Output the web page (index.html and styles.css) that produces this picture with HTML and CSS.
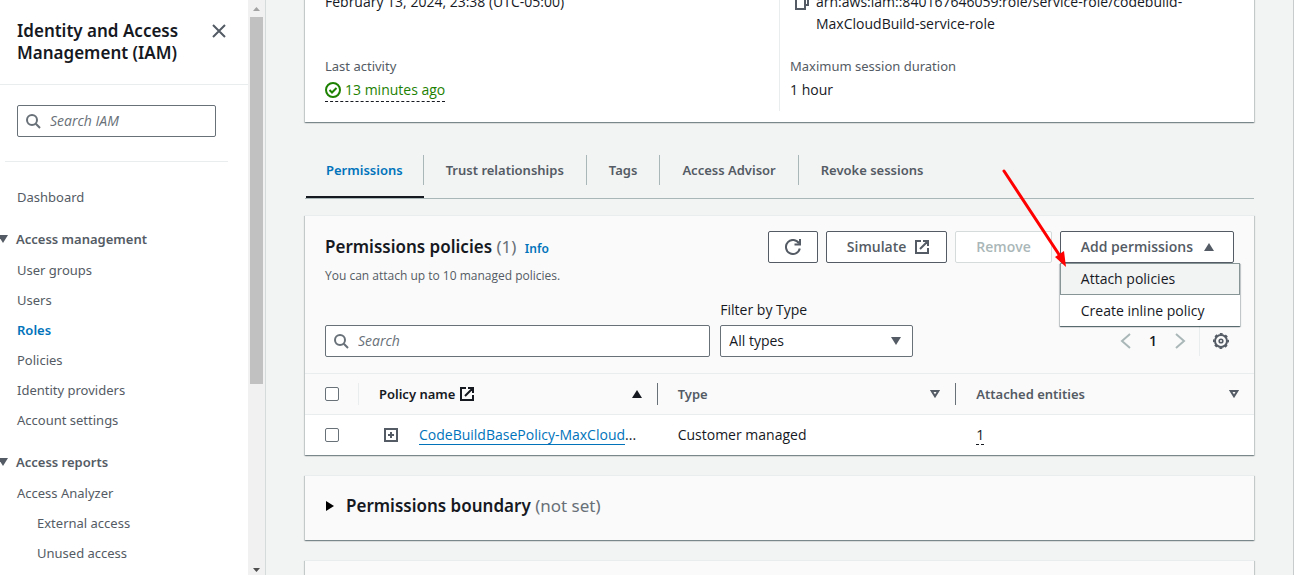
FILE: index.html
```html
<!DOCTYPE html>
<html lang="en">
<head>
<meta charset="utf-8">
<title>IAM role</title>
<link rel="stylesheet" href="styles.css">
</head>
<body>
<div class="app">
  <aside class="sidebar">
    <div class="side-body">
      <header class="side-head">
        <h2 class="side-title">Identity and Access Management (IAM)</h2>
        <button class="icon-btn" type="button" aria-label="Close navigation">
          <svg width="16" height="16" viewBox="0 0 16 16"><path d="M2 2l12 12M14 2L2 14" class="line"/></svg>
        </button>
      </header>
      <label class="search side-search">
        <svg width="16" height="16" viewBox="0 0 16 16"><circle cx="6" cy="7" r="5" class="line"/><path d="M9.800 10.800L14 15" class="line"/></svg>
        <input type="text" placeholder="Search IAM" aria-label="Search IAM">
      </label>
      <hr class="side-rule">
      <nav class="nav">
        <a class="nav-link" href="#">Dashboard</a>
        <button class="nav-group" type="button"><svg width="10" height="8" viewBox="0 0 10 8"><path d="M0 0h10L5 8z"/></svg>Access management</button>
        <ul class="nav-list">
          <li><a class="nav-link" href="#">User groups</a></li>
          <li><a class="nav-link" href="#">Users</a></li>
          <li><a class="nav-link current" href="#">Roles</a></li>
          <li><a class="nav-link" href="#">Policies</a></li>
          <li><a class="nav-link" href="#">Identity providers</a></li>
          <li><a class="nav-link" href="#">Account settings</a></li>
        </ul>
        <button class="nav-group" type="button"><svg width="10" height="8" viewBox="0 0 10 8"><path d="M0 0h10L5 8z"/></svg>Access reports</button>
        <ul class="nav-list">
          <li><a class="nav-link" href="#">Access Analyzer</a></li>
          <li><a class="nav-link nested" href="#">External access</a></li>
          <li><a class="nav-link nested" href="#">Unused access</a></li>
        </ul>
      </nav>
    </div>
    <div class="scrollbar" aria-hidden="true">
      <svg width="7" height="4" viewBox="0 0 7 4"><path d="M3.500 0L7 4H0z" fill="#a3a3a3"/></svg>
      <div class="thumb"></div>
      <svg width="7" height="4" viewBox="0 0 7 4"><path d="M0 0h7L3.500 4z" fill="#505050"/></svg>
    </div>
  </aside>

  <main class="main">
    <section class="panel summary">
      <dl class="col">
        <dd>February 13, 2024, 23:38 (UTC-05:00)</dd>
        <dt class="second">Last activity</dt>
        <dd class="value"><span class="status"><svg width="16" height="16" viewBox="0 0 16 16"><circle cx="8" cy="8" r="7" class="line"/><path d="M4.500 8l2.500 2.500L11.500 6" class="line"/></svg>13 minutes ago</span></dd>
      </dl>
      <dl class="col">
        <dd class="arn">
          <button class="icon-btn copy" type="button" aria-label="Copy ARN"><svg width="16" height="16" viewBox="0 0 16 16"><path d="M2 5h9v10H2zM5 5V1h9v10h-3" class="line"/></svg></button>
          <span>arn:aws:iam::840167646059:role/service-role/codebuild-<br>MaxCloudBuild-service-role</span>
        </dd>
        <dt class="second">Maximum session duration</dt>
        <dd class="value">1 hour</dd>
      </dl>
    </section>

    <div class="tabs" role="tablist">
      <button class="tab active" role="tab" aria-selected="true" type="button"><span>Permissions</span></button>
      <button class="tab" role="tab" type="button"><span>Trust relationships</span></button>
      <button class="tab" role="tab" type="button"><span>Tags</span></button>
      <button class="tab" role="tab" type="button"><span>Access Advisor</span></button>
      <button class="tab" role="tab" type="button"><span>Revoke sessions</span></button>
    </div>

    <div class="stack">
    <section class="panel">
      <header class="panel-head">
        <div class="heading">
          <h2 class="title">Permissions policies <span class="count">(1)</span> <a class="info" href="#">Info</a></h2>
          <p class="desc">You can attach up to 10 managed policies.</p>
        </div>
        <div class="actions">
          <button class="btn" type="button" aria-label="Refresh"><svg width="16" height="16" viewBox="0 0 16 16"><path d="M14.800 9.500A7 7 0 1 1 14 4.400" class="line"/><path d="M15 0v5.500H9.500" class="line"/></svg></button>
          <button class="btn" type="button">Simulate <svg width="16" height="16" viewBox="0 0 16 16"><path d="M7 2H2v12h12V9M9 2h5v5M14 2L6 10" class="line"/></svg></button>
          <button class="btn" type="button" disabled>Remove</button>
          <div class="dropdown">
            <button class="btn" type="button" aria-expanded="true">Add permissions <svg width="16" height="16" viewBox="0 0 16 16"><path d="M3 12h10L8 4z" class="fill"/></svg></button>
            <ul class="menu">
              <li><button class="item hover" type="button">Attach policies</button></li>
              <li><button class="item" type="button">Create inline policy</button></li>
            </ul>
          </div>
        </div>
      </header>
      <div class="filters">
        <label class="search">
          <svg width="16" height="16" viewBox="0 0 16 16"><circle cx="6" cy="7" r="5" class="line"/><path d="M9.800 10.800L14 15" class="line"/></svg>
          <input type="text" placeholder="Search" aria-label="Search policies">
        </label>
        <div class="field">
          <label for="type">Filter by Type</label>
          <div class="select">
            <select id="type"><option>All types</option></select>
            <svg width="10" height="8" viewBox="0 0 10 8"><path d="M0 0h10L5 8z" class="fill"/></svg>
          </div>
        </div>
        <div class="pager">
          <button class="icon-btn pale" type="button" aria-label="Previous page"><svg width="16" height="16" viewBox="0 0 16 16"><path d="M12 1L4 8l8 7" class="line"/></svg></button>
          <button class="icon-btn page" type="button">1</button>
          <button class="icon-btn pale" type="button" aria-label="Next page"><svg width="16" height="16" viewBox="0 0 16 16"><path d="M4 1l8 7-8 7" class="line"/></svg></button>
          <span class="gear">
          <button class="icon-btn" type="button" aria-label="Preferences"><svg width="16" height="16" viewBox="0 0 16 16"><g fill="none" stroke="currentColor"><circle cx="8" cy="8" r="6" stroke-width="2"/><circle cx="8" cy="8" r="7.200" stroke-width="1.600" stroke-dasharray="2.830" stroke-dashoffset="1.410"/><circle cx="8" cy="8" r="1.800" stroke-width="1.600"/></g></svg></button>
          </span>
        </div>
      </div>
      <table class="table">
        <thead>
          <tr>
            <th class="pick"><input type="checkbox" aria-label="Select all"></th>
            <th class="sorted"><div class="th">Policy name <svg width="16" height="16" viewBox="0 0 16 16"><path d="M7 2H2v12h12V9M9 2h5v5M14 2L6 10" class="line"/></svg><svg class="sort" width="10" height="8" viewBox="0 0 10 8"><path d="M0 8h10L5 0z" class="fill"/></svg></div></th>
            <th><div class="th">Type <svg class="sort" width="10" height="8" viewBox="0 0 10 8"><path d="M1.700 1h6.600L5 6.300z" class="line"/></svg></div></th>
            <th><div class="th">Attached entities <svg class="sort" width="10" height="8" viewBox="0 0 10 8"><path d="M1.700 1h6.600L5 6.300z" class="line"/></svg></div></th>
          </tr>
        </thead>
        <tbody>
          <tr>
            <td class="pick"><input type="checkbox" aria-label="Select CodeBuildBasePolicy"></td>
            <td><div class="policy"><button class="icon-btn" type="button" aria-label="Expand"><svg width="16" height="16" viewBox="0 0 16 16"><path d="M2 2h12v12H2zM5 8h6M8 5v6" class="line"/></svg></button><span><a class="link" href="#">CodeBuildBasePolicy-MaxCloud</a>...</span></div></td>
            <td>Customer managed</td>
            <td><span class="dashed">1</span></td>
          </tr>
        </tbody>
      </table>
    </section>

    <section class="panel">
      <button class="expander" type="button"><svg width="8" height="10" viewBox="0 0 8 10"><path d="M0 0v10l8-5z"/></svg><span>Permissions boundary <span class="count">(not set)</span></span></button>
    </section>
    <section class="panel">
      <div class="expander"></div>
    </section>
    </div>
  </main>
  <svg class="pointer" width="66" height="100" viewBox="0 0 66 100" aria-hidden="true"><path d="M2 2L58 87" stroke="#f00" stroke-width="3" stroke-linecap="round"/><path d="M64 98L53 88l9-6z" fill="#f00"/></svg>
</div>
</body>
</html>
```

FILE: styles.css
```css
* { box-sizing: border-box; }
body {
  margin: 0;
  font-family: "Open Sans", "Noto Sans", sans-serif;
  font-size: 14px;
  line-height: 22px;
  color: #16191f;
  background: #f2f3f3;
}
h2, p, ul, dl, dd { margin: 0; padding: 0; }
ul { list-style: none; }
button, input, select { font: inherit; color: inherit; }
svg { display: block; flex: none; }
.line { fill: none; stroke: currentColor; stroke-width: 2; }
.fill { fill: currentColor; }

.app { position: relative; display: flex; height: 100vh; overflow: hidden; }

.icon-btn {
  display: flex;
  padding: 0;
  border: 0;
  background: none;
  color: #545b64;
}

/* Labels, navigation and headings */
.nav-link, .nav-group, .tab, .table th, .col dt {
  font-family: "Noto Sans", "Open Sans", sans-serif;
  font-size: 13px;
}
.side-title, .title, .expander {
  font-family: "Noto Sans", "Open Sans", sans-serif;
  font-size: 17px;
  font-weight: 600;
}

/* Side navigation */
.sidebar {
  display: flex;
  flex: none;
  width: 266px;
  background: #fff;
  border-right: 1px solid #d5dbdb;
}
.side-body { flex: 1; overflow: hidden; }
.side-head {
  display: flex;
  justify-content: space-between;
  padding: 20px 21px 20px 17px;
  border-bottom: 1px solid #eaeded;
}
.side-head .icon-btn { padding-top: 3px; height: 19px; }
.side-title { width: 180px; }
.search {
  display: flex;
  align-items: center;
  gap: 8px;
  height: 32px;
  padding: 0 8px;
  color: #687078;
  background: #fff;
  border: 1px solid #687078;
  border-radius: 2px;
}
.search input {
  flex: 1;
  min-width: 0;
  padding: 0;
  border: 0;
  outline: 0;
  background: none;
}
.search input::placeholder { color: #687078; font-style: italic; opacity: 1; }
.side-search { margin: 20px 32px 24px 17px; }
.side-rule { margin: 0 20px 24px 5px; border: 0; border-top: 1px solid #eaeded; }
.nav { padding-left: 17px; }
.nav-link { display: block; color: #545b64; text-decoration: none; }
.nav-link.current { color: #0073bb; font-weight: 600; }
.nav-link.nested { padding-left: 20px; }
.nav-group {
  display: flex;
  align-items: center;
  gap: 8px;
  margin: 20px 0 9px -19px;
  padding: 0;
  border: 0;
  background: none;
  color: #545b64;
  font-weight: 600;
}
.nav-group path { fill: #545b64; }
.nav-list { display: grid; gap: 8px; }

.scrollbar {
  display: flex;
  flex: none;
  flex-direction: column;
  align-items: center;
  justify-content: space-between;
  width: 17px;
  padding: 7px 2px 3px;
  background: #f1f1f1;
}
.thumb { width: 13px; height: 65%; margin: 6px 0 auto; background: #c1c1c1; }

/* Content */
.main {
  flex: 1;
  min-width: 0;
  padding: 0 39px;
  overflow: hidden;
  border-right: 1px solid #c8cccc;
}
.panel {
  background: #fafafa;
  border-top: 1px solid #eaeded;
  box-shadow: 0 1px 1px 0 rgba(0, 28, 36, .3), 1px 1px 1px 0 rgba(0, 28, 36, .15), -1px 1px 1px 0 rgba(0, 28, 36, .15);
}
.summary {
  display: grid;
  grid-template-columns: 1fr 1fr;
  margin-top: -10px;
  padding: 0 21px 11px 20px;
  background: #fff;
}
.col { display: flex; flex-direction: column; padding-bottom: 10px; }
.col + .col { padding-left: 10px; border-left: 1px solid #eaeded; }
.col dt { margin-bottom: 2px; color: #545b64; }
.col .second { margin-top: auto; }
.value { display: flex; height: 22px; }
.arn { display: flex; gap: 6px; margin-bottom: 20px; padding-left: 4px; }
.arn span { min-width: 0; }
.copy { padding-top: 3px; height: 19px; }
.status {
  display: flex;
  align-items: center;
  gap: 4px;
  height: 23px;
  color: #1d8102;
  border-bottom: 1px dashed #16191f;
}

.tabs {
  display: flex;
  margin: 33px 0 16px;
  padding-left: 1px;
  border-bottom: 1px solid #aab7b8;
}
.tab {
  padding: 0 0 11px;
  border: 0;
  border-bottom: 2px solid transparent;
  background: none;
  color: #545b64;
  font-weight: 600;
}
.tab span { display: block; padding: 4px 22px; border-right: 1px solid #aab7b8; }
.tab:first-child span { padding: 4px 20px; }
.tab:last-child span { border-right: 0; }
.tab.active { color: #0073bb; border-bottom-color: #16191f; }

.stack { display: grid; gap: 20px; }
.panel-head { display: flex; justify-content: space-between; padding: 15px 20px 0; }
.title { padding: 5px 0 4px; }
.count { color: #687078; font-weight: 400; }
.info { margin-left: 4px; color: #0073bb; font-size: 12px; font-weight: 600; text-decoration: none; }
.desc { margin-top: 1px; color: #545b64; font-size: 12px; }
.actions { display: flex; align-items: flex-start; gap: 8px; }
.btn {
  display: flex;
  align-items: center;
  justify-content: center;
  gap: 12px;
  height: 32px;
  padding: 0 20px;
  border: 1px solid #545b64;
  border-radius: 2px;
  background: #fff;
  color: #545b64;
  font-weight: 600;
}
.btn svg { margin: 0 -4px; }
.btn:disabled { color: #aab7b8; border-color: #d5dbdb; }
.dropdown { position: relative; }
.menu {
  position: absolute;
  z-index: 1;
  top: 100%;
  left: 0;
  width: 180px;
  background: #fff;
  box-shadow: 0 1px 1px 0 rgba(0, 28, 36, .5), 1px 1px 1px 0 rgba(0, 28, 36, .15), -1px 1px 1px 0 rgba(0, 28, 36, .15);
}
.item {
  display: block;
  width: 100%;
  height: 31px;
  padding: 0 20px;
  border: 1px solid transparent;
  background: none;
  text-align: left;
}
.item.hover { height: 32px; background: #f2f3f3; border-color: #879596; }

.filters {
  display: grid;
  grid-template-columns: 2fr 1fr 311px;
  align-items: end;
  gap: 10px;
  padding: 12px 20px 16px;
}
.field { display: grid; gap: 4px; }
.select { position: relative; }
.select select {
  width: 100%;
  height: 32px;
  padding: 0 8px;
  border: 1px solid #687078;
  border-radius: 2px;
  background: #fff;
  appearance: none;
}
.select svg { position: absolute; top: 12px; right: 12px; color: #545b64; }
.pager { display: flex; align-items: center; justify-content: flex-end; height: 32px; }
.pager .pale { color: #aab7b8; }
.pager .page { padding: 0 15px; color: #16191f; font-weight: 600; }
.gear { margin-left: 11px; padding: 7px 5px 7px 13px; border-left: 1px solid #eaeded; }

.table { width: 100%; table-layout: fixed; border-collapse: collapse; }
.table th, .table td { height: 41px; padding: 0 20px 0 21px; text-align: left; border-top: 1px solid #eaeded; }
.table td { height: 40px; }
.table th { color: #545b64; font-weight: 600; padding: 0; }
.table .pick { width: 53px; padding: 0 0 0 20px; }
.table tbody { background: #fff; }
.th { display: flex; align-items: center; gap: 4px; padding: 0 15px 0 20px; border-left: 1px solid #687078; }
.sorted .th { color: #16191f; border-left-color: #eaeded; }
.sort { margin-left: auto; }
input[type="checkbox"] {
  display: block;
  width: 14px;
  height: 14px;
  margin: 0;
  appearance: none;
  background: #fff;
  border: 1px solid #687078;
  border-radius: 2px;
}
.policy { display: flex; align-items: center; gap: 20px; padding-left: 4px; white-space: nowrap; }
.link { color: #0073bb; text-decoration: none; border-bottom: 1px solid #0073bb; }
.dashed { border-bottom: 1px dashed #16191f; }

.expander {
  display: flex;
  align-items: center;
  gap: 12px;
  width: 100%;
  height: 64px;
  padding: 0 21px 4px;
  border: 0;
  background: none;
}

/* Annotation arrow over the page */
.pointer { position: absolute; z-index: 2; left: 1002px; top: 169px; }
```
